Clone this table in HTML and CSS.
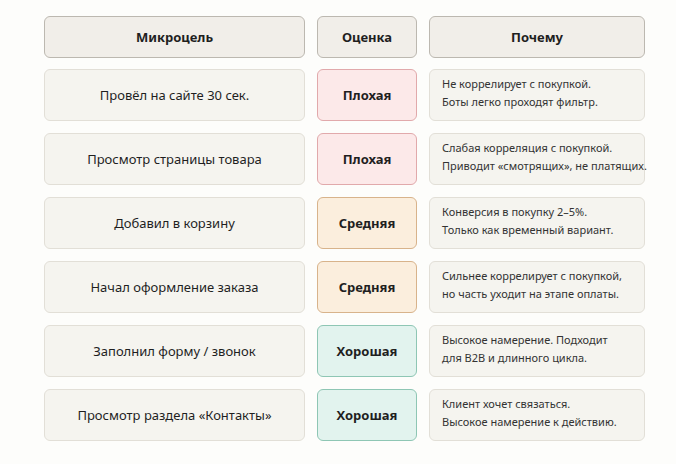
FILE: index.html
```html
<!DOCTYPE html>
<html lang="ru">
<head>
<meta charset="utf-8">
<link rel="stylesheet" href="styles.css">
</head>
<body>
<div class="table">
  <div class="cell head">Микроцель</div>
  <div class="cell head">Оценка</div>
  <div class="cell head">Почему</div>

  <div class="cell goal">Провёл на сайте 30 сек.</div>
  <div class="cell grade bad">Плохая</div>
  <div class="cell why">Не коррелирует с покупкой.<br>Боты легко проходят фильтр.</div>

  <div class="cell goal">Просмотр страницы товара</div>
  <div class="cell grade bad">Плохая</div>
  <div class="cell why">Слабая корреляция с покупкой.<br>Приводит «смотрящих», не платящих.</div>

  <div class="cell goal">Добавил в корзину</div>
  <div class="cell grade mid">Средняя</div>
  <div class="cell why">Конверсия в покупку 2–5%.<br>Только как временный вариант.</div>

  <div class="cell goal">Начал оформление заказа</div>
  <div class="cell grade mid">Средняя</div>
  <div class="cell why">Сильнее коррелирует с покупкой,<br>но часть уходит на этапе оплаты.</div>

  <div class="cell goal">Заполнил форму / звонок</div>
  <div class="cell grade good">Хорошая</div>
  <div class="cell why">Высокое намерение. Подходит<br>для B2B и длинного цикла.</div>

  <div class="cell goal">Просмотр раздела «Контакты»</div>
  <div class="cell grade good">Хорошая</div>
  <div class="cell why">Клиент хочет связаться.<br>Высокое намерение к действию.</div>
</div>
</body>
</html>
```
FILE: styles.css
```css
html, body {
  margin: 0;
  padding: 0;
  background: #fdfdfb;
}
body {
  font-family: "Noto Sans", "Open Sans", sans-serif;
  color: #1f1f1f;
  padding: 16px 0 0 44px;
}
.table {
  display: grid;
  grid-template-columns: 261px 100px 216px;
  grid-template-rows: 41px repeat(6, 52px);
  column-gap: 12px;
  row-gap: 12px;
}
.cell {
  box-sizing: border-box;
  border: 1px solid #e2dfd7;
  border-radius: 6px;
  background: #f5f4ef;
  display: flex;
  align-items: center;
  justify-content: center;
  font-size: 13px;
}
.head {
  background: #f1eee9;
  border-color: #bcb8b0;
  font-weight: 700;
  margin-bottom: -1px;
}
.grade {
  font-weight: 700;
}
.bad {
  background: #fce9e9;
  border-color: #e1a9ab;
}
.mid {
  background: #fbeedd;
  border-color: #d8b38b;
}
.good {
  background: #e2f3ee;
  border-color: #8ec6b4;
}
.why {
  justify-content: flex-start;
  padding: 0 0 4px 12px;
  font-size: 11px;
  line-height: 18px;
  color: #333;
  white-space: nowrap;
}
```
